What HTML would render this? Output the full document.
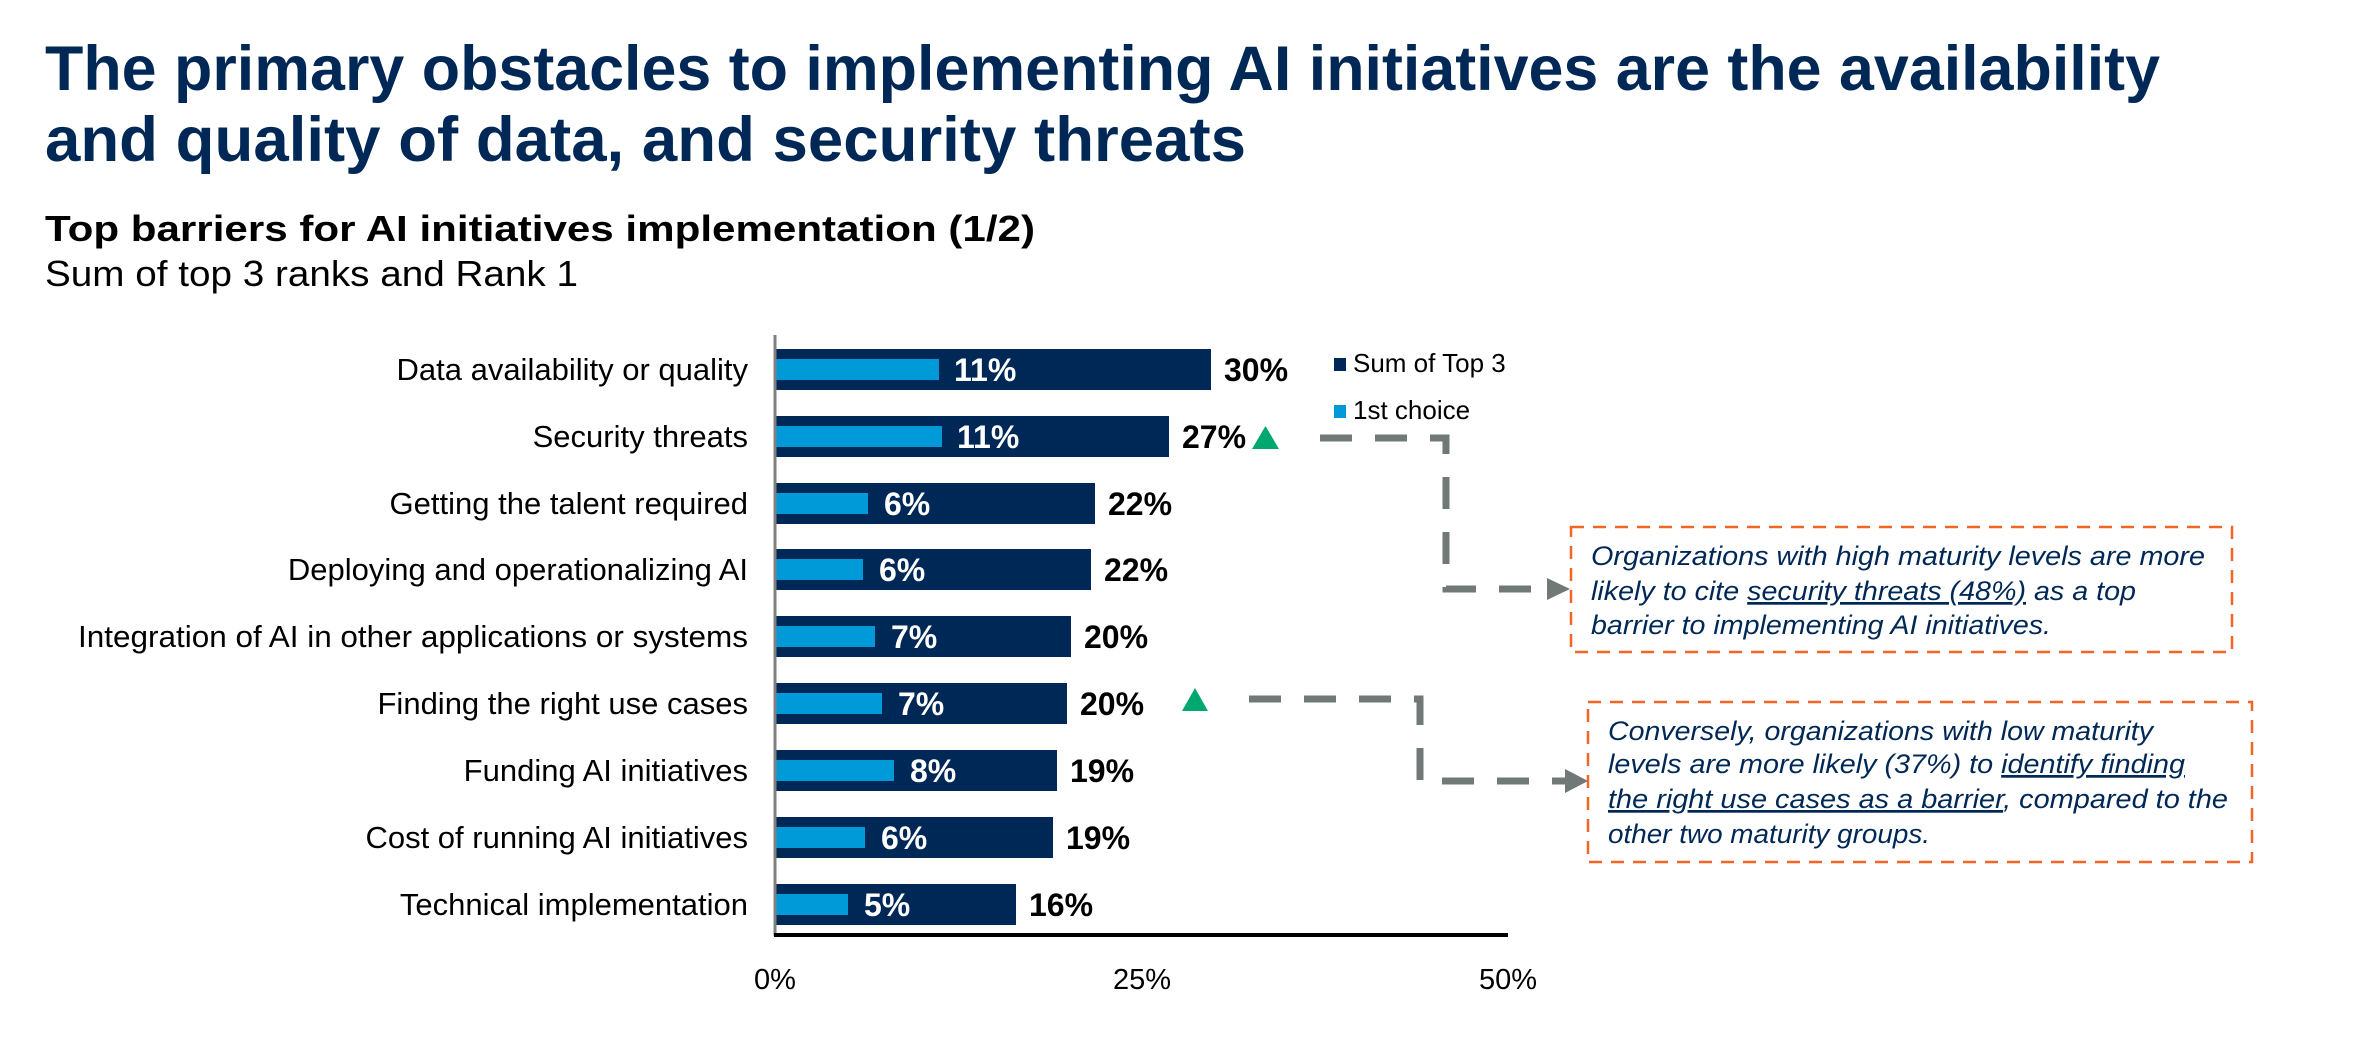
<!DOCTYPE html>
<html><head><meta charset="utf-8"><style>
html,body{margin:0;padding:0;background:#fff;}
svg{display:block;}
</style></head><body>
<svg width="2365" height="1063" viewBox="0 0 2365 1063" xmlns="http://www.w3.org/2000/svg" font-family="'Liberation Sans', Arial, sans-serif">
<rect width="2365" height="1063" fill="#fff"/>
<g fill="#002856" font-weight="bold" font-size="63">
<text x="45" y="90" textLength="2115" lengthAdjust="spacingAndGlyphs">The primary obstacles to implementing AI initiatives are the availability</text>
<text x="45" y="161" textLength="1201" lengthAdjust="spacingAndGlyphs">and quality of data, and security threats</text>
</g>
<text x="45" y="241" font-size="36" font-weight="bold" fill="#000" textLength="990" lengthAdjust="spacingAndGlyphs">Top barriers for AI initiatives implementation (1/2)</text>
<text x="45" y="286" font-size="36" fill="#000" textLength="533" lengthAdjust="spacingAndGlyphs">Sum of top 3 ranks and Rank 1</text>

<g font-size="31" text-anchor="end" fill="#000">
<text x="748" y="380">Data availability or quality</text>
<text x="748" y="447">Security threats</text>
<text x="748" y="514">Getting the talent required</text>
<text x="748" y="580">Deploying and operationalizing AI</text>
<text x="748" y="647" textLength="670" lengthAdjust="spacingAndGlyphs">Integration of AI in other applications or systems</text>
<text x="748" y="714">Finding the right use cases</text>
<text x="748" y="781">Funding AI initiatives</text>
<text x="748" y="848">Cost of running AI initiatives</text>
<text x="748" y="915">Technical implementation</text>
</g>
<g fill="#002856">
<rect x="776" y="349" width="435" height="41"/>
<rect x="776" y="416" width="393" height="41"/>
<rect x="776" y="483" width="319" height="41"/>
<rect x="776" y="549" width="315" height="41"/>
<rect x="776" y="616" width="295" height="41"/>
<rect x="776" y="683" width="291" height="41"/>
<rect x="776" y="750" width="281" height="41"/>
<rect x="776" y="817" width="277" height="41"/>
<rect x="776" y="884" width="240" height="41"/>
</g>
<g fill="#009ad8">
<rect x="776" y="359" width="163" height="21"/>
<rect x="776" y="426" width="166" height="21"/>
<rect x="776" y="493" width="92" height="21"/>
<rect x="776" y="559" width="87" height="21"/>
<rect x="776" y="626" width="99" height="21"/>
<rect x="776" y="693" width="106" height="21"/>
<rect x="776" y="760" width="118" height="21"/>
<rect x="776" y="827" width="89" height="21"/>
<rect x="776" y="894" width="72" height="21"/>
</g>
<g font-size="32" font-weight="bold" fill="#fff">
<text x="954" y="381">11%</text>
<text x="957" y="448">11%</text>
<text x="884" y="515">6%</text>
<text x="879" y="581">6%</text>
<text x="891" y="648">7%</text>
<text x="898" y="715">7%</text>
<text x="910" y="782">8%</text>
<text x="881" y="849">6%</text>
<text x="864" y="916">5%</text>
</g>
<g font-size="32" font-weight="bold" fill="#000">
<text x="1224" y="381">30%</text>
<text x="1182" y="448">27%</text>
<text x="1108" y="515">22%</text>
<text x="1104" y="581">22%</text>
<text x="1084" y="648">20%</text>
<text x="1080" y="715">20%</text>
<text x="1070" y="782">19%</text>
<text x="1066" y="849">19%</text>
<text x="1029" y="916">16%</text>
</g>
<line x1="775" y1="335" x2="775" y2="936" stroke="#808080" stroke-width="3"/>
<line x1="774" y1="935" x2="1508" y2="935" stroke="#000" stroke-width="4"/>
<g font-size="29" fill="#000" text-anchor="middle">
<text x="775" y="989">0%</text>
<text x="1142" y="989">25%</text>
<text x="1508" y="989">50%</text>
</g>

<rect x="1334" y="358" width="12" height="13" fill="#002856"/>
<text x="1353" y="372" font-size="26" fill="#000">Sum of Top 3</text>
<rect x="1334" y="405" width="12" height="13" fill="#009ad8"/>
<text x="1353" y="419" font-size="26" fill="#000">1st choice</text>

<polygon points="1252,449 1279,449 1265.5,426" fill="#00a870"/>
<polygon points="1182,711 1208,711 1195,688" fill="#00a870"/>

<g stroke="#707878" stroke-width="7" fill="none" stroke-dasharray="32 23">
<polyline points="1320,438 1446,438 1446,589 1548,589"/>
<polyline points="1249,699 1420,699 1420,781 1566,781"/>
</g>
<polygon points="1547,578 1570,589 1547,600" fill="#707878"/>
<polygon points="1565,769 1588,781 1565,793" fill="#707878"/>

<g stroke="#f26522" stroke-width="2.5" fill="none" stroke-dasharray="13 9">
<rect x="1571" y="527" width="661" height="125"/>
<rect x="1588" y="702" width="664" height="160"/>
</g>
<g font-size="27" font-style="italic" fill="#002856">
<text x="1591" y="565" textLength="614" lengthAdjust="spacingAndGlyphs">Organizations with high maturity levels are more</text>
<text x="1591" y="600" textLength="545" lengthAdjust="spacingAndGlyphs">likely to cite <tspan text-decoration="underline">security threats (48%)</tspan> as a top</text>
<text x="1591" y="634" textLength="460" lengthAdjust="spacingAndGlyphs">barrier to implementing AI initiatives.</text>
<text x="1608" y="740" textLength="545" lengthAdjust="spacingAndGlyphs">Conversely, organizations with low maturity</text>
<text x="1608" y="773" textLength="577" lengthAdjust="spacingAndGlyphs">levels are more likely (37%) to <tspan text-decoration="underline">identify finding</tspan></text>
<text x="1608" y="808" textLength="620" lengthAdjust="spacingAndGlyphs"><tspan text-decoration="underline">the right use cases as a barrier</tspan>, compared to the</text>
<text x="1608" y="843" textLength="322" lengthAdjust="spacingAndGlyphs">other two maturity groups.</text>
</g>
</svg>
</body></html>
